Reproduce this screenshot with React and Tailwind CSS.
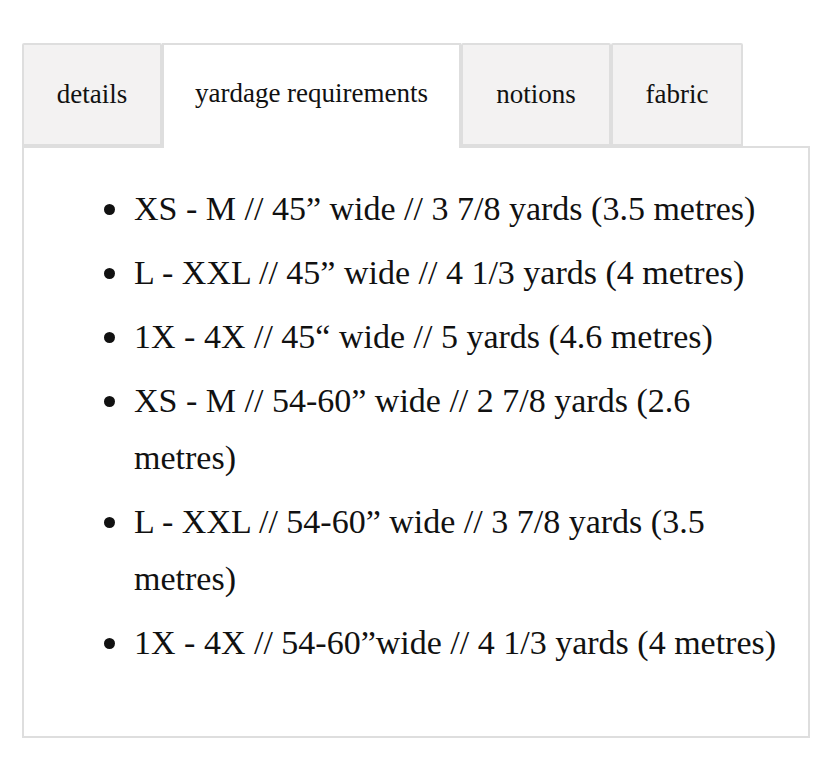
const tabs = [
  { label: "details", w: "w-[140px]" },
  { label: "yardage requirements", w: "w-[299px]", active: true },
  { label: "notions", w: "w-[150px]" },
  { label: "fabric", w: "w-[132px]" },
];

const items = [
  "XS - M // 45” wide // 3 7/8 yards (3.5 metres)",
  "L - XXL // 45” wide // 4 1/3 yards (4 metres)",
  "1X - 4X // 45“ wide // 5 yards (4.6 metres)",
  "XS - M // 54-60” wide // 2 7/8 yards (2.6 metres)",
  "L - XXL // 54-60” wide // 3 7/8 yards (3.5 metres)",
  "1X - 4X // 54-60”wide // 4 1/3 yards (4 metres)",
];

export default function App() {
  return (
    <div className="min-h-screen bg-white text-[#111] pt-[43px] pl-[22px] font-['Liberation_Serif',serif]">
      <div className="w-[788px]">
        {/* tab strip */}
        <div className="flex items-end">
          {tabs.map(t => (
            <div
              key={t.label}
              className={
                t.active
                  ? `${t.w} h-[105px] -mb-[2px] relative z-10 bg-white border-2 border-b-0 border-[#dedede] flex items-center justify-center pb-[6px] text-[27px]`
                  : `${t.w} h-[103px] bg-[#f3f2f2] border-2 border-[#dedede] rounded-t-[2px] flex items-center justify-center text-[27px]`
              }
            >
              {t.label}
            </div>
          ))}
        </div>

        {/* panel */}
        <div className="border-2 border-[#dedede] h-[592px] pt-[32px]">
          <ul className="list-none pl-[110px] pr-[22px] text-[34px] leading-[57px]">
            {items.map(i => (
              <li
                key={i}
                className="relative mb-[7px] before:content-[''] before:absolute before:left-[-30px] before:top-[24px] before:w-[11px] before:h-[11px] before:rounded-full before:bg-[#111]"
              >
                {i}
              </li>
            ))}
          </ul>
        </div>
      </div>
    </div>
  );
}
